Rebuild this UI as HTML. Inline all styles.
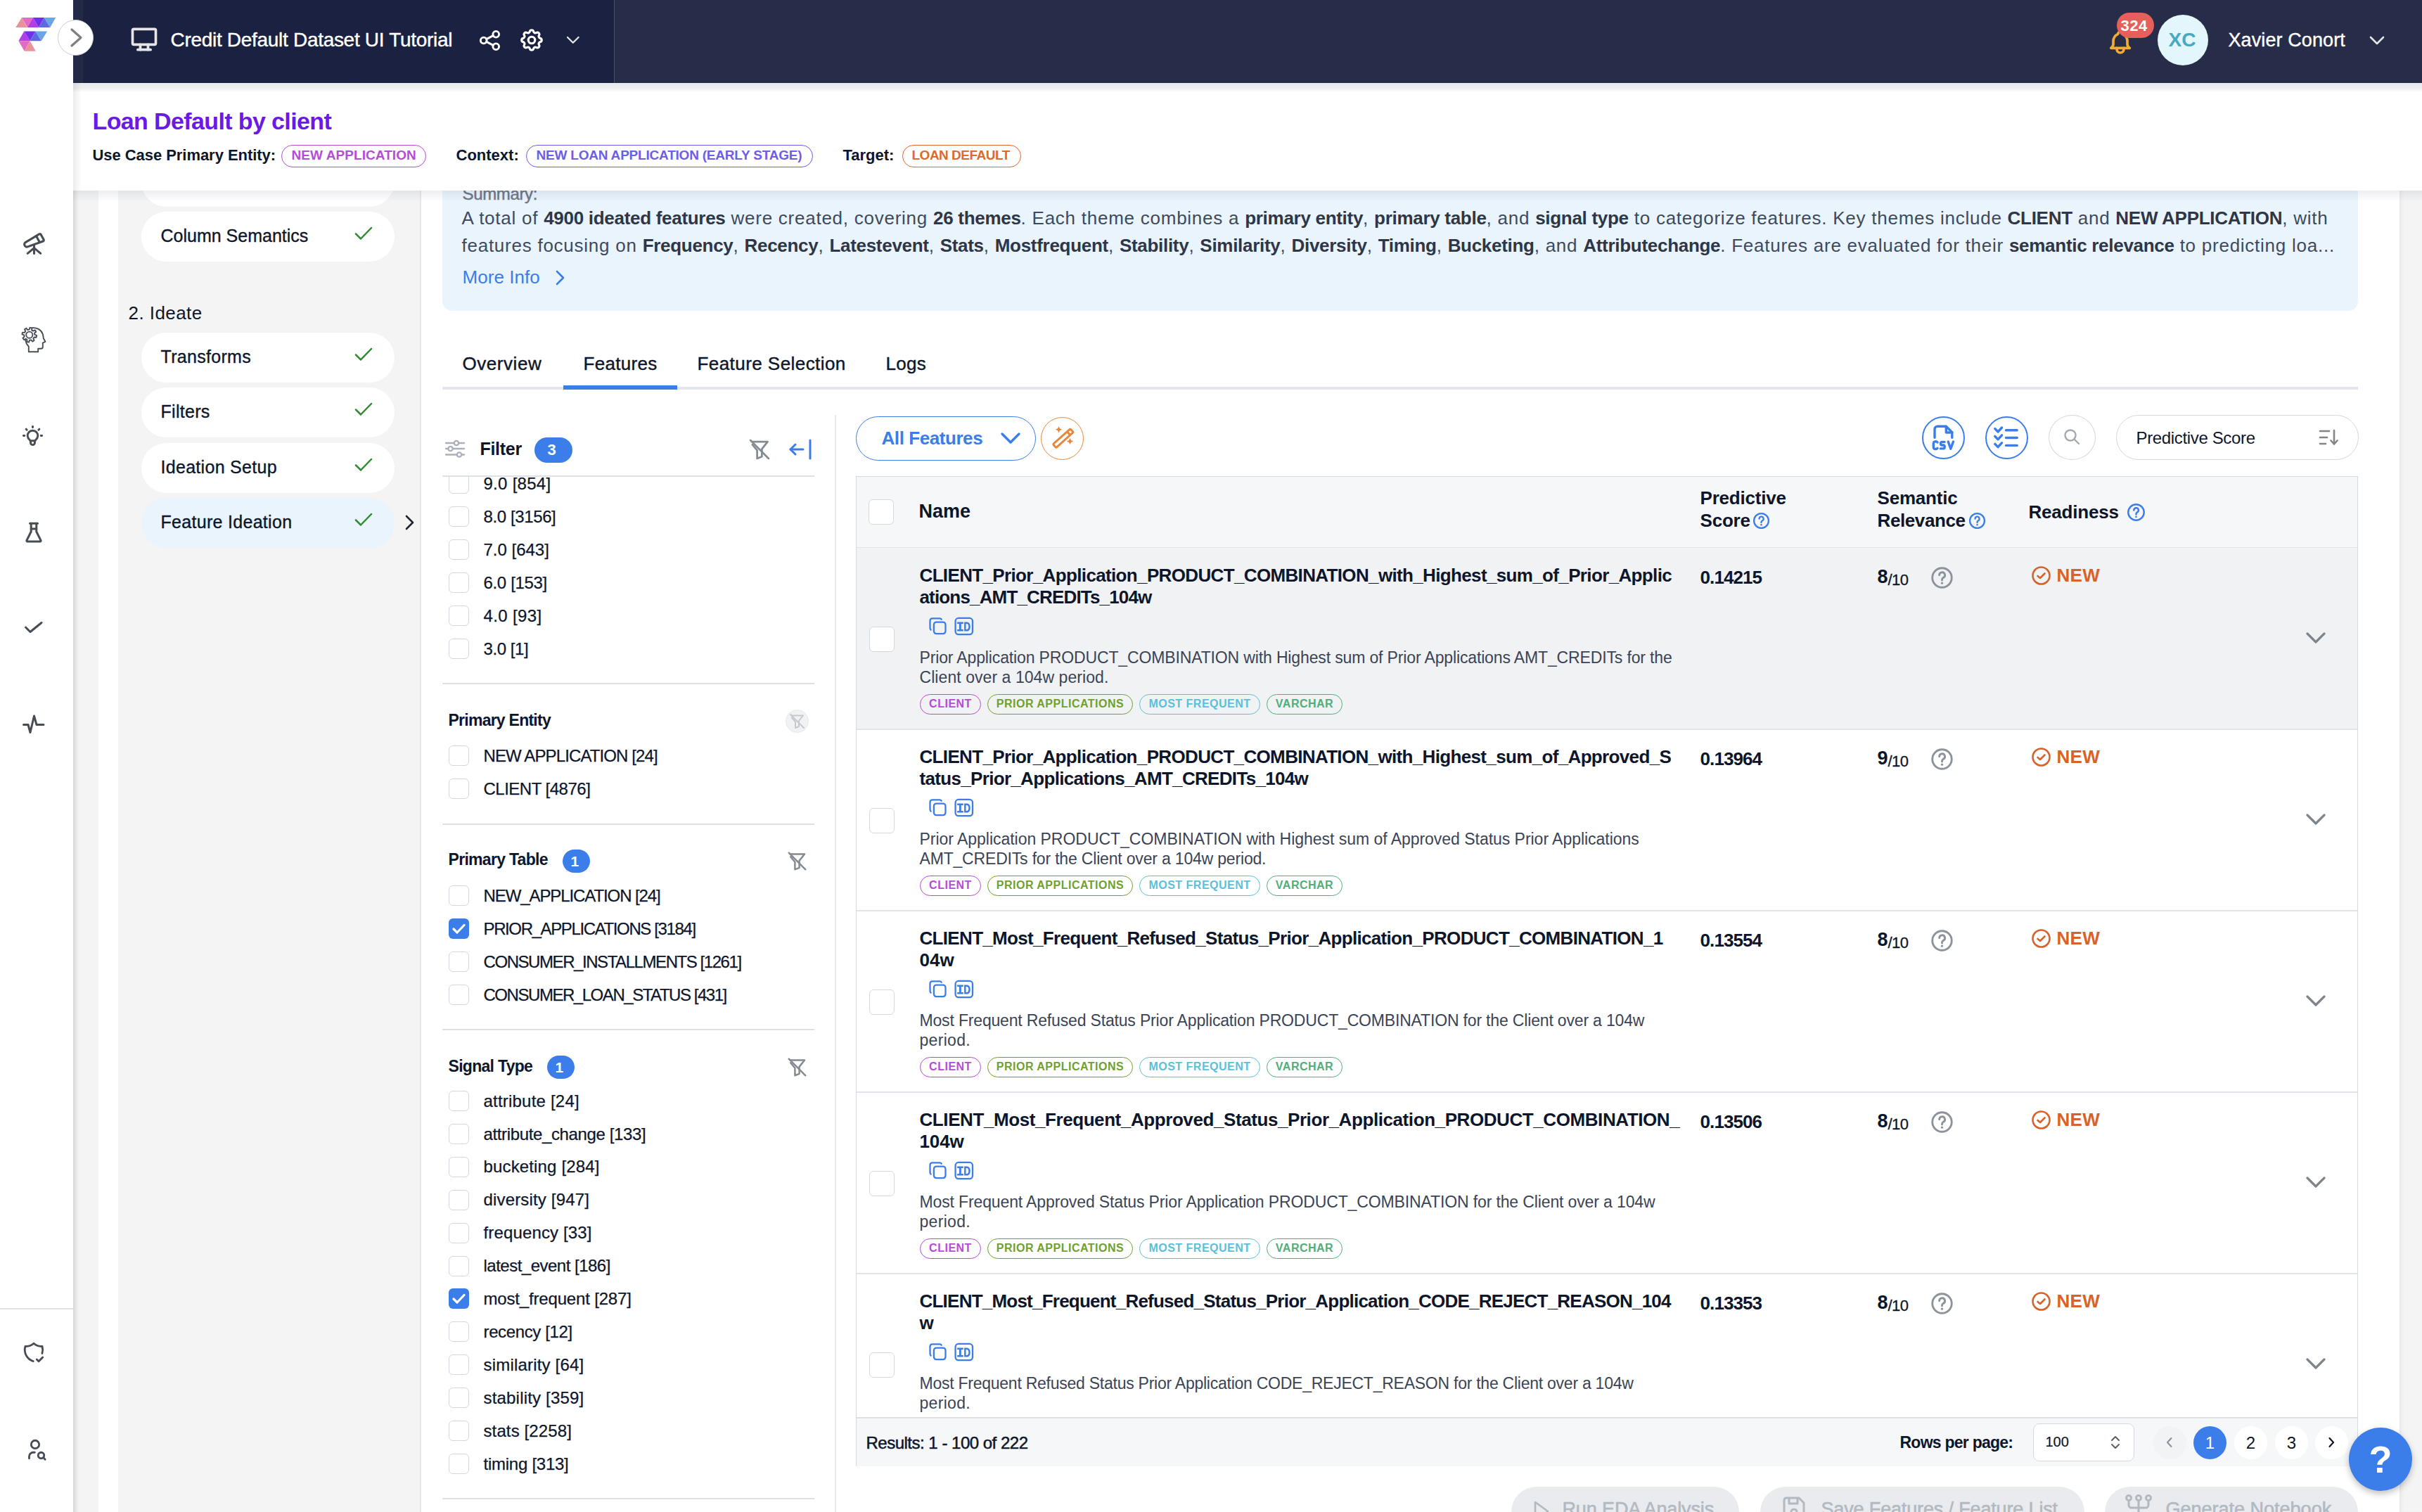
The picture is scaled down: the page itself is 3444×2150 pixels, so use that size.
<!DOCTYPE html><html><head><meta charset="utf-8"><title>Feature Ideation</title><style>
*{box-sizing:border-box;margin:0;padding:0}
html,body{width:3444px;height:2150px;overflow:hidden;background:#fff;font-family:"Liberation Sans",sans-serif;-webkit-font-smoothing:antialiased}
.a{position:absolute}
.t{position:absolute;white-space:nowrap;line-height:1}
.tw{position:absolute;line-height:1}
@media (max-width:2400px){html{zoom:0.5}}
</style></head><body><div class="a" style="left:599px;top:271px;width:2813px;height:1879px;background:#fff;"></div>
<div class="a" style="left:3412px;top:271px;width:32px;height:1879px;background:#f4f4f4;box-shadow:inset 6px 0 6px -4px rgba(0,0,0,.06);"></div>
<div class="a" style="left:104px;top:271px;width:36px;height:1879px;background:#f4f4f4;"></div>
<div class="a" style="left:104px;top:271px;width:9px;height:1879px;background:linear-gradient(90deg,rgba(0,0,0,.07),rgba(0,0,0,0));"></div>
<div class="a" style="left:140px;top:271px;width:28px;height:1879px;background:#fff;"></div>
<div class="a" style="left:168px;top:271px;width:431px;height:1879px;background:#f4f4f4;border-right:2px solid #e6e6ea;"></div>
<div class="a" style="left:201px;top:223px;width:360px;height:71px;background:#fff;border-radius:36px;"></div>
<div class="a" style="left:201px;top:301px;width:360px;height:71px;background:#fff;border-radius:36px;"></div>
<div class="t" style="left:228.5px;top:322.84px;font-size:25px;color:#0e162b;-webkit-text-stroke:0.35px #0e162b;">Column Semantics</div>
<svg class="a" style="left:503px;top:321px;" width="28" height="22" viewBox="0 0 28 22" fill="none"><path d="M3 11.5 L10 18.5 L25 3" stroke="#2e8b2e" stroke-width="2.5" stroke-linecap="round" stroke-linejoin="round"/></svg>
<div class="t" style="left:182.5px;top:431.99px;font-size:26px;color:#0e162b;letter-spacing:0.44px;">2. Ideate</div>
<div class="a" style="left:201px;top:473px;width:360px;height:71px;background:#fff;border-radius:36px;"></div>
<div class="t" style="left:228.5px;top:494.84px;font-size:25px;color:#0e162b;letter-spacing:0.3px;-webkit-text-stroke:0.35px #0e162b;">Transforms</div>
<svg class="a" style="left:503px;top:493px;" width="28" height="22" viewBox="0 0 28 22" fill="none"><path d="M3 11.5 L10 18.5 L25 3" stroke="#2e8b2e" stroke-width="2.5" stroke-linecap="round" stroke-linejoin="round"/></svg>
<div class="a" style="left:201px;top:551px;width:360px;height:71px;background:#fff;border-radius:36px;"></div>
<div class="t" style="left:228.5px;top:572.84px;font-size:25px;color:#0e162b;letter-spacing:0.3px;-webkit-text-stroke:0.35px #0e162b;">Filters</div>
<svg class="a" style="left:503px;top:571px;" width="28" height="22" viewBox="0 0 28 22" fill="none"><path d="M3 11.5 L10 18.5 L25 3" stroke="#2e8b2e" stroke-width="2.5" stroke-linecap="round" stroke-linejoin="round"/></svg>
<div class="a" style="left:201px;top:630px;width:360px;height:71px;background:#fff;border-radius:36px;"></div>
<div class="t" style="left:228.5px;top:651.84px;font-size:25px;color:#0e162b;letter-spacing:0.3px;-webkit-text-stroke:0.35px #0e162b;">Ideation Setup</div>
<svg class="a" style="left:503px;top:650px;" width="28" height="22" viewBox="0 0 28 22" fill="none"><path d="M3 11.5 L10 18.5 L25 3" stroke="#2e8b2e" stroke-width="2.5" stroke-linecap="round" stroke-linejoin="round"/></svg>
<div class="a" style="left:201px;top:708px;width:360px;height:71px;background:#e9f4fd;border-radius:36px;"></div>
<div class="t" style="left:228.5px;top:729.84px;font-size:25px;color:#0e162b;letter-spacing:0.3px;-webkit-text-stroke:0.35px #0e162b;">Feature Ideation</div>
<svg class="a" style="left:503px;top:728px;" width="28" height="22" viewBox="0 0 28 22" fill="none"><path d="M3 11.5 L10 18.5 L25 3" stroke="#2e8b2e" stroke-width="2.5" stroke-linecap="round" stroke-linejoin="round"/></svg>
<svg class="a" style="left:574px;top:731px;" width="18" height="24" viewBox="0 0 18 24" fill="none"><path d="M4 3 L13 12 L4 21" stroke="#1f2430" stroke-width="2.6" stroke-linecap="round" stroke-linejoin="round"/></svg>
<div class="a" style="left:0px;top:0px;width:104px;height:2150px;background:#fff;"></div>
<div class="a" style="left:104px;top:0px;width:6px;height:2150px;background:linear-gradient(90deg,rgba(0,0,0,.05),rgba(0,0,0,0));"></div>
<div class="a" style="left:0px;top:1860px;width:104px;height:2px;background:#dfe2e6;"></div>
<svg class="a" style="left:0px;top:0px;" width="104" height="90" viewBox="0 0 104 90" fill="none"><polygon points="22.22,38.89 38.43,38.89 31.02,25.00" fill="#e8939a"/><polygon points="31.02,25.00 46.76,25.00 38.89,38.89" fill="#e36cc3"/><polygon points="38.89,38.89 55.09,38.89 46.76,25.00" fill="#b23fe6"/><polygon points="46.76,25.00 62.96,25.00 55.09,38.89" fill="#7231e6"/><polygon points="55.09,38.89 71.30,38.89 62.96,25.00" fill="#5e6ae0"/><polygon points="62.96,25.00 79.17,25.00 71.30,38.89" fill="#6aa6e4"/><polygon points="26.39,58.33 42.59,58.33 34.26,44.44" fill="#b23fe6"/><polygon points="34.26,44.44 50.46,44.44 42.59,58.33" fill="#7231e6"/><polygon points="42.59,58.33 58.80,58.33 50.46,44.44" fill="#5e6ae0"/><polygon points="50.46,44.44 67.13,44.44 58.80,58.33" fill="#6aa6e4"/><polygon points="26.39,58.33 42.59,58.33 34.72,72.69" fill="#e36cc3"/><polygon points="34.72,72.69 50.74,72.69 42.59,58.33" fill="#e8939a"/></svg>
<svg class="a" style="left:30px;top:328px;" width="37" height="37" viewBox="0 0 24 24" fill="none"><g stroke="#474d55" stroke-width="2" stroke-linecap="round" stroke-linejoin="round" fill="none"><path d="M6 21l6 -5l6 5"/><path d="M12 13v8"/><path d="M3.294 13.678l.166 .281c.52 .88 1.624 1.265 2.605 .91l14.242 -5.165a1.023 1.023 0 0 0 .565 -1.456l-2.62 -4.705a1.087 1.087 0 0 0 -1.447 -.42l-.056 .032l-12.694 7.618c-1.02 .613 -1.357 1.897 -.76 2.905z"/><path d="M14 5l3 5.5"/></g></svg>
<svg class="a" style="left:24px;top:460px;" width="48" height="48" viewBox="0 0 48 48" fill="none"><g stroke="#474d55" stroke-width="1.9" fill="none" stroke-linejoin="round" stroke-linecap="round">
<path d="M21.8 6.2 C28 5.6 34.5 8.5 36.8 15 C37.6 17.5 37.6 19.5 37.8 21 L40.4 25.8 L36.8 27.6 V33.5 C36.8 34.8 35.6 35.8 34.2 35.8 H30.2 V40.3 H16.8 V32.8 C14.2 29.8 12.6 27 12.1 23.6"/>
<path d="M25.40,15.93 L28.17,16.93 L27.57,19.76 L24.63,19.53 L23.36,21.38 L24.62,24.05 L22.20,25.63 L20.27,23.39 L18.07,23.80 L17.07,26.57 L14.24,25.97 L14.47,23.03 L12.62,21.76 L9.95,23.02 L8.37,20.60 L10.61,18.67 L10.20,16.47 L7.43,15.47 L8.03,12.64 L10.97,12.87 L12.24,11.02 L10.98,8.35 L13.40,6.77 L15.33,9.01 L17.53,8.60 L18.53,5.83 L21.36,6.43 L21.13,9.37 L22.98,10.64 L25.65,9.38 L27.23,11.80 L24.99,13.73 Z"/>
<circle cx="17.8" cy="16.2" r="4.6"/>
</g></svg>
<svg class="a" style="left:29px;top:602px;" width="35" height="35" viewBox="0 0 24 24" fill="none"><g stroke="#474d55" stroke-width="2" stroke-linecap="round" stroke-linejoin="round" fill="none"><path d="M3 12h1m8 -9v1m8 8h1m-15.4 -6.4l.7 .7m12.1 -.7l-.7 .7"/><path d="M9 16a5 5 0 1 1 6 0a3.5 3.5 0 0 0 -1 3a2 2 0 0 1 -4 0a3.5 3.5 0 0 0 -1 -3"/><path d="M9.7 17l4.6 0"/></g></svg>
<svg class="a" style="left:33px;top:741px;" width="30" height="34" viewBox="0 0 30 34" fill="none"><g stroke="#474d55" stroke-width="3" fill="none" stroke-linejoin="round" stroke-linecap="round"><path d="M9.5 3.3 H20.5"/><path d="M11.2 3.3 V15 L5 27.4 a1.1 1.1 0 0 0 1 1.6 H24 a1.1 1.1 0 0 0 1-1.6 L18.8 15 V3.3"/><path d="M11.2 11 H18.8"/></g></svg>
<svg class="a" style="left:33px;top:883px;" width="32" height="24" viewBox="0 0 32 24" fill="none"><path d="M3.5 9 L10 15.5 L26 2.5" stroke="#474d55" stroke-width="3" fill="none" stroke-linecap="round" stroke-linejoin="round"/></svg>
<svg class="a" style="left:31px;top:1015px;" width="34" height="32" viewBox="0 0 34 32" fill="none"><path d="M2.5 15.5 H9 L12 26.5 L17.5 3 L21 15.5 H31" stroke="#474d55" stroke-width="3" fill="none" stroke-linecap="round" stroke-linejoin="round"/></svg>
<svg class="a" style="left:31px;top:1906px;" width="34" height="34" viewBox="0 0 24 24" fill="none"><g stroke="#474d55" stroke-width="2" stroke-linecap="round" stroke-linejoin="round" fill="none"><path d="M11.46 20.846a12 12 0 0 1 -7.96 -14.846a12 12 0 0 0 8.5 -3a12 12 0 0 0 8.5 3a12 12 0 0 1 -.09 7.06"/><path d="M15 19l2 2l4 -4"/></g></svg>
<svg class="a" style="left:33px;top:2044px;" width="34" height="34" viewBox="0 0 24 24" fill="none"><g stroke="#474d55" stroke-width="2" stroke-linecap="round" stroke-linejoin="round" fill="none"><path d="M8 7a4 4 0 1 0 8 0a4 4 0 0 0 -8 0"/><path d="M6 21v-2a4 4 0 0 1 4 -4h1.5"/><path d="M18 18m-3 0a3 3 0 1 0 6 0a3 3 0 1 0 -6 0"/><path d="M20.2 20.2l1.8 1.8"/></g></svg>
<div class="a" style="left:0;top:0;width:3444px;height:271px;z-index:4;">
<div class="a" style="left:104px;top:0px;width:769px;height:118px;background:#1b2140;"></div>
<div class="a" style="left:104px;top:0px;width:14px;height:118px;background:#242a45;"></div>
<div class="a" style="left:873px;top:0px;width:2571px;height:118px;background:#272c48;border-left:1.5px solid #4a4f66;"></div>
<div class="a" style="left:82px;top:28px;width:51px;height:51px;border-radius:50%;background:#fff;border:1.5px solid #c9ced6;"></div>
<svg class="a" style="left:96px;top:38px;" width="26" height="32" viewBox="0 0 26 32" fill="none"><path d="M6 4 L19 15.5 L6 27" stroke="#7f7f7f" stroke-width="3.2" fill="none" stroke-linecap="round" stroke-linejoin="round"/></svg>
<svg class="a" style="left:183px;top:34px;" width="44" height="44" viewBox="0 0 24 24" fill="none"><g stroke="#e6e6e6" stroke-width="2" stroke-linecap="round" stroke-linejoin="round" fill="none"><path d="M3 5a1 1 0 0 1 1 -1h16a1 1 0 0 1 1 1v10a1 1 0 0 1 -1 1h-16a1 1 0 0 1 -1 -1v-10z"/><path d="M7 20h10"/><path d="M9 16v4"/><path d="M15 16v4"/></g></svg>
<div class="t" style="left:242.5px;top:43.30px;font-size:28px;color:#ffffff;letter-spacing:-0.3px;-webkit-text-stroke:0.4px #fff;">Credit Default Dataset UI Tutorial</div>
<svg class="a" style="left:679px;top:40px;" width="35" height="35" viewBox="0 0 24 24" fill="none"><g stroke="#ffffff" stroke-width="2" stroke-linecap="round" stroke-linejoin="round" fill="none"><path d="M6 12m-3 0a3 3 0 1 0 6 0a3 3 0 1 0 -6 0"/><path d="M18 6m-3 0a3 3 0 1 0 6 0a3 3 0 1 0 -6 0"/><path d="M18 18m-3 0a3 3 0 1 0 6 0a3 3 0 1 0 -6 0"/><path d="M8.7 10.7l6.6 -3.4"/><path d="M8.7 13.3l6.6 3.4"/></g></svg>
<svg class="a" style="left:737px;top:38px;" width="38" height="38" viewBox="0 0 24 24" fill="none"><g stroke="#ffffff" stroke-width="2" stroke-linecap="round" stroke-linejoin="round" fill="none"><path d="M10.325 4.317c.426 -1.756 2.924 -1.756 3.35 0a1.724 1.724 0 0 0 2.573 1.066c1.543 -.94 3.31 .826 2.37 2.37a1.724 1.724 0 0 0 1.065 2.572c1.756 .426 1.756 2.924 0 3.35a1.724 1.724 0 0 0 -1.066 2.573c.94 1.543 -.826 3.31 -2.37 2.37a1.724 1.724 0 0 0 -2.572 1.065c-.426 1.756 -2.924 1.756 -3.35 0a1.724 1.724 0 0 0 -2.573 -1.066c-1.543 .94 -3.31 -.826 -2.37 -2.37a1.724 1.724 0 0 0 -1.065 -2.572c-1.756 -.426 -1.756 -2.924 0 -3.35a1.724 1.724 0 0 0 1.066 -2.573c-.94 -1.543 .826 -3.31 2.37 -2.37c1 .608 2.296 .07 2.572 -1.065z"/><path d="M9 12a3 3 0 1 0 6 0a3 3 0 0 0 -6 0"/></g></svg>
<svg class="a" style="left:803px;top:48px;" width="24" height="18" viewBox="0 0 24 18" fill="none"><path d="M4 5 L11.8 12.8 L19.6 5" stroke="#e6e6e6" stroke-width="2.3" fill="none" stroke-linecap="round" stroke-linejoin="round"/></svg>
<svg class="a" style="left:2995px;top:40px;" width="40" height="40" viewBox="0 0 24 24" fill="none"><g stroke="#f2ac32" stroke-width="2.2" stroke-linecap="round" stroke-linejoin="round" fill="none"><path d="M10 5a2 2 0 1 1 4 0a7 7 0 0 1 4 6v3a4 4 0 0 0 2 3h-16a4 4 0 0 0 2 -3v-3a7 7 0 0 1 4 -6"/><path d="M9 17v1a3 3 0 0 0 6 0v-1"/></g></svg>
<div class="a" style="left:3010px;top:18px;width:53px;height:36px;border-radius:18px;background:#e75f5a;"></div>
<div class="t" style="left:3015.5px;top:26.38px;font-size:22px;color:#fff;font-weight:700;letter-spacing:0.5px;">324</div>
<div class="a" style="left:3068px;top:21px;width:72px;height:72px;border-radius:50%;background:#e3f6fb;"></div>
<div class="t" style="left:3083.5px;top:43.30px;font-size:28px;color:#4aa8c0;font-weight:700;">XC</div>
<div class="t" style="left:3168.5px;top:44.14px;font-size:27px;color:#ffffff;letter-spacing:0.1px;-webkit-text-stroke:0.4px #fff;">Xavier Conort</div>
<svg class="a" style="left:3367px;top:48px;" width="26" height="20" viewBox="0 0 26 20" fill="none"><path d="M4 5 L13 14 L22 5" stroke="#e6e6e6" stroke-width="2.6" fill="none" stroke-linecap="round" stroke-linejoin="round"/></svg>
<div class="a" style="left:104px;top:118px;width:3340px;height:153px;background:#fff;"></div>
<div class="a" style="left:104px;top:118px;width:3340px;height:13px;background:linear-gradient(180deg,rgba(20,30,60,.095) 0%,rgba(20,30,60,.08) 55%,rgba(20,30,60,0) 100%);"></div>
<div class="a" style="left:104px;top:118px;width:12px;height:153px;background:linear-gradient(90deg,rgba(0,0,0,.08),rgba(0,0,0,0));"></div>
<div class="a" style="left:104px;top:271px;width:3340px;height:16px;background:linear-gradient(180deg,rgba(20,30,60,.075),rgba(20,30,60,0));z-index:5;"></div>
<div class="t" style="left:131.5px;top:155.22px;font-size:34px;color:#6a19e6;font-weight:700;letter-spacing:-0.62px;">Loan Default by client</div>
<div class="t" style="left:131.5px;top:210.38px;font-size:22px;color:#0e162b;font-weight:700;letter-spacing:-0.05px;">Use Case Primary Entity:</div>
<div class="a" style="left:400px;top:206px;width:206px;height:32px;border-radius:16px;border:1.6px solid #b64bd9;"></div>
<div class="t" style="left:414.5px;top:210.92px;font-size:19px;color:#b64bd9;font-weight:700;letter-spacing:0.07px;">NEW APPLICATION</div>
<div class="t" style="left:648.5px;top:210.38px;font-size:22px;color:#0e162b;font-weight:700;">Context:</div>
<div class="a" style="left:748px;top:206px;width:408px;height:32px;border-radius:16px;border:1.6px solid #6d5de8;"></div>
<div class="t" style="left:762.5px;top:210.92px;font-size:19px;color:#6d5de8;font-weight:700;letter-spacing:-0.21px;">NEW LOAN APPLICATION (EARLY STAGE)</div>
<div class="t" style="left:1198.5px;top:210.38px;font-size:22px;color:#0e162b;font-weight:700;">Target:</div>
<div class="a" style="left:1283px;top:206px;width:169px;height:32px;border-radius:16px;border:1.6px solid #e06a2c;"></div>
<div class="t" style="left:1296.5px;top:210.92px;font-size:19px;color:#e06a2c;font-weight:700;letter-spacing:-0.5px;">LOAN DEFAULT</div>
</div>
<div class="a" style="left:629px;top:230px;width:2724px;height:212px;background:#e9f4fd;border-radius:14px;"></div>
<div class="t" style="left:657.5px;top:263.68px;font-size:24px;color:#6f7788;letter-spacing:-0.35px;-webkit-text-stroke:0.45px #6f7788;">Summary:</div>
<div class="sum1 t" style="left:656.5px;top:296.99px;font-size:26px;color:#3e4a5e;letter-spacing:0.75px;">A total of <b style="color:#2e3647;letter-spacing:-0.29px">4900 ideated features</b> were created, covering <b style="color:#2e3647;letter-spacing:-0.29px">26 themes</b>. Each theme combines a <b style="color:#2e3647;letter-spacing:-0.29px">primary entity</b>, <b style="color:#2e3647;letter-spacing:-0.29px">primary table</b>, and <b style="color:#2e3647;letter-spacing:-0.29px">signal type</b> to categorize features. Key themes include <b style="color:#2e3647;letter-spacing:-0.29px">CLIENT</b> and <b style="color:#2e3647;letter-spacing:-0.29px">NEW APPLICATION</b>, with</div>
<div class="sum2 t" style="left:656.5px;top:335.99px;font-size:26px;color:#3e4a5e;letter-spacing:0.75px;">features focusing on <b style="color:#2e3647;letter-spacing:-0.29px">Frequency</b>, <b style="color:#2e3647;letter-spacing:-0.29px">Recency</b>, <b style="color:#2e3647;letter-spacing:-0.29px">Latestevent</b>, <b style="color:#2e3647;letter-spacing:-0.29px">Stats</b>, <b style="color:#2e3647;letter-spacing:-0.29px">Mostfrequent</b>, <b style="color:#2e3647;letter-spacing:-0.29px">Stability</b>, <b style="color:#2e3647;letter-spacing:-0.29px">Similarity</b>, <b style="color:#2e3647;letter-spacing:-0.29px">Diversity</b>, <b style="color:#2e3647;letter-spacing:-0.29px">Timing</b>, <b style="color:#2e3647;letter-spacing:-0.29px">Bucketing</b>, and <b style="color:#2e3647;letter-spacing:-0.29px">Attributechange</b>. Features are evaluated for their <b style="color:#2e3647;letter-spacing:-0.29px">semantic relevance</b> to predicting loa...</div>
<div class="t" style="left:657.5px;top:380.99px;font-size:26px;color:#3b7de9;letter-spacing:0.05px;">More Info</div>
<svg class="a" style="left:786px;top:382px;" width="22" height="26" viewBox="0 0 22 26" fill="none"><path d="M6 4 L15 13 L6 22" stroke="#3b7de9" stroke-width="2.6" fill="none" stroke-linecap="round" stroke-linejoin="round"/></svg>
<div class="a" style="left:629px;top:550px;width:2724px;height:4px;background:#e3e6eb;"></div>
<div class="a" style="left:801px;top:548px;width:162px;height:6px;background:#3b7de9;"></div>
<div class="t" style="left:657.5px;top:503.99px;font-size:26px;color:#0e162b;letter-spacing:0.55px;-webkit-text-stroke:0.4px #0e162b;">Overview</div>
<div class="t" style="left:829.5px;top:503.99px;font-size:26px;color:#0e162b;letter-spacing:0.3px;-webkit-text-stroke:0.4px #0e162b;">Features</div>
<div class="t" style="left:991.5px;top:503.99px;font-size:26px;color:#0e162b;letter-spacing:0.44px;-webkit-text-stroke:0.4px #0e162b;">Feature Selection</div>
<div class="t" style="left:1259.5px;top:503.99px;font-size:26px;color:#0e162b;letter-spacing:0.3px;-webkit-text-stroke:0.4px #0e162b;">Logs</div>
<div class="a" style="left:1187px;top:590px;width:2px;height:1560px;background:#e8eaee;"></div>
<svg class="a" style="left:631px;top:624px;" width="32" height="30" viewBox="0 0 32 30" fill="none"><g stroke="#aab0b8" stroke-width="2.3" fill="none" stroke-linecap="round"><path d="M3 6 H29"/><path d="M3 14 H29"/><path d="M3 22.5 H29"/></g><g fill="#fff" stroke="#aab0b8" stroke-width="2.3"><circle cx="18" cy="6" r="3.2"/><circle cx="9.5" cy="14" r="3.2"/><circle cx="22" cy="22.5" r="3.2"/></g></svg>
<div class="t" style="left:682.5px;top:625.84px;font-size:25px;color:#0e162b;font-weight:700;letter-spacing:-0.3px;">Filter</div>
<div class="a" style="left:760px;top:622px;width:54px;height:36px;border-radius:18px;background:#3b7de9;"></div>
<div class="t" style="left:778.5px;top:629.38px;font-size:22px;color:#fff;font-weight:700;">3</div>
<svg class="a" style="left:1063px;top:622px;" width="34" height="34" viewBox="0 0 25 25" fill="none"><g stroke="#858b93" stroke-width="2" fill="none" stroke-linecap="round" stroke-linejoin="round"><path d="M4.5 4.5 H21 L15 12 V20 L10 22 V13.5 L5 7.5"/><path d="M3 3 L22 22"/></g></svg>
<svg class="a" style="left:1120px;top:622px;" width="38" height="34" viewBox="0 0 38 34" fill="none"><g stroke="#3b7de9" stroke-width="3" fill="none" stroke-linecap="round" stroke-linejoin="round"><path d="M4 17 H22"/><path d="M11 10 L4 17 L11 24"/><path d="M32 4 V30"/></g></svg>
<div class="a" style="left:629px;top:676px;width:529px;height:2px;background:#dde1e6;"></div>
<div class="a" style="left:600px;top:678px;width:586px;height:1472px;overflow:hidden;">
<div class="a" style="left:38px;top:-5px;width:29px;height:29px;border-radius:6px;background:#fff;border:1.5px solid #d3d7de;"></div>
<div class="t" style="left:87.5px;top:-2.32px;font-size:24px;color:#0e162b;letter-spacing:0.275px;-webkit-text-stroke:0.25px #0e162b;">9.0 [854]</div>
<div class="a" style="left:38px;top:42px;width:29px;height:29px;border-radius:6px;background:#fff;border:1.5px solid #d3d7de;"></div>
<div class="t" style="left:87.5px;top:44.68px;font-size:24px;color:#0e162b;letter-spacing:-0.389px;-webkit-text-stroke:0.25px #0e162b;">8.0 [3156]</div>
<div class="a" style="left:38px;top:89px;width:29px;height:29px;border-radius:6px;background:#fff;border:1.5px solid #d3d7de;"></div>
<div class="t" style="left:87.5px;top:91.68px;font-size:24px;color:#0e162b;letter-spacing:-0.013px;-webkit-text-stroke:0.25px #0e162b;">7.0 [643]</div>
<div class="a" style="left:38px;top:136px;width:29px;height:29px;border-radius:6px;background:#fff;border:1.5px solid #d3d7de;"></div>
<div class="t" style="left:87.5px;top:138.68px;font-size:24px;color:#0e162b;letter-spacing:-0.35px;-webkit-text-stroke:0.25px #0e162b;">6.0 [153]</div>
<div class="a" style="left:38px;top:183px;width:29px;height:29px;border-radius:6px;background:#fff;border:1.5px solid #d3d7de;"></div>
<div class="t" style="left:87.5px;top:185.68px;font-size:24px;color:#0e162b;letter-spacing:0.371px;-webkit-text-stroke:0.25px #0e162b;">4.0 [93]</div>
<div class="a" style="left:38px;top:230px;width:29px;height:29px;border-radius:6px;background:#fff;border:1.5px solid #d3d7de;"></div>
<div class="t" style="left:87.5px;top:232.68px;font-size:24px;color:#0e162b;letter-spacing:-0.433px;-webkit-text-stroke:0.25px #0e162b;">3.0 [1]</div>
<div class="a" style="left:29px;top:293px;width:529px;height:2px;background:#dde1e6;"></div>
<div class="t" style="left:37.5px;top:334.53px;font-size:23px;color:#0e162b;font-weight:700;letter-spacing:-0.75px;">Primary Entity</div>
<div class="a" style="left:517px;top:331px;width:33px;height:33px;border-radius:50%;background:#f1f2f4;border:1px solid #e6e8eb;"></div>
<svg class="a" style="left:521px;top:335px;" width="25" height="25" viewBox="0 0 25 25" fill="none"><g stroke="#c6cacf" stroke-width="2" fill="none" stroke-linecap="round" stroke-linejoin="round"><path d="M4.5 4.5 H21 L15 12 V20 L10 22 V13.5 L5 7.5"/><path d="M3 3 L22 22"/></g></svg>
<div class="a" style="left:38px;top:382px;width:29px;height:29px;border-radius:6px;background:#fff;border:1.5px solid #d3d7de;"></div>
<div class="t" style="left:87.5px;top:384.68px;font-size:24px;color:#0e162b;letter-spacing:-0.882px;-webkit-text-stroke:0.25px #0e162b;">NEW APPLICATION [24]</div>
<div class="a" style="left:38px;top:429px;width:29px;height:29px;border-radius:6px;background:#fff;border:1.5px solid #d3d7de;"></div>
<div class="t" style="left:87.5px;top:431.68px;font-size:24px;color:#0e162b;letter-spacing:-0.5px;-webkit-text-stroke:0.25px #0e162b;">CLIENT [4876]</div>
<div class="a" style="left:29px;top:493px;width:529px;height:2px;background:#dde1e6;"></div>
<div class="t" style="left:37.5px;top:532.53px;font-size:23px;color:#0e162b;font-weight:700;letter-spacing:-0.7px;">Primary Table</div>
<div class="a" style="left:200px;top:530px;width:39px;height:33px;border-radius:17px;background:#3b7de9;"></div>
<div class="t" style="left:211.5px;top:536.22px;font-size:21px;color:#fff;font-weight:700;">1</div>
<svg class="a" style="left:518px;top:531px;" width="31" height="31" viewBox="0 0 25 25" fill="none"><g stroke="#858b93" stroke-width="2" fill="none" stroke-linecap="round" stroke-linejoin="round"><path d="M4.5 4.5 H21 L15 12 V20 L10 22 V13.5 L5 7.5"/><path d="M3 3 L22 22"/></g></svg>
<div class="a" style="left:38px;top:581px;width:29px;height:29px;border-radius:6px;background:#fff;border:1.5px solid #d3d7de;"></div>
<div class="t" style="left:87.5px;top:583.68px;font-size:24px;color:#0e162b;letter-spacing:-1.09px;-webkit-text-stroke:0.25px #0e162b;">NEW_APPLICATION [24]</div>
<div class="a" style="left:38px;top:628px;width:29px;height:29px;border-radius:6px;background:#3b7de9;"></div>
<svg class="a" style="left:38px;top:628px;" width="29" height="29" viewBox="0 0 29 29" fill="none"><path d="M7 15 L12 20 L22 9.5" stroke="#fff" stroke-width="3.2" fill="none" stroke-linecap="round" stroke-linejoin="round"/></svg>
<div class="t" style="left:87.5px;top:630.68px;font-size:24px;color:#0e162b;letter-spacing:-1.378px;-webkit-text-stroke:0.25px #0e162b;">PRIOR_APPLICATIONS [3184]</div>
<div class="a" style="left:38px;top:675px;width:29px;height:29px;border-radius:6px;background:#fff;border:1.5px solid #d3d7de;"></div>
<div class="t" style="left:87.5px;top:677.68px;font-size:24px;color:#0e162b;letter-spacing:-1.434px;-webkit-text-stroke:0.25px #0e162b;">CONSUMER_INSTALLMENTS [1261]</div>
<div class="a" style="left:38px;top:722px;width:29px;height:29px;border-radius:6px;background:#fff;border:1.5px solid #d3d7de;"></div>
<div class="t" style="left:87.5px;top:724.68px;font-size:24px;color:#0e162b;letter-spacing:-1.458px;-webkit-text-stroke:0.25px #0e162b;">CONSUMER_LOAN_STATUS [431]</div>
<div class="a" style="left:29px;top:785px;width:529px;height:2px;background:#dde1e6;"></div>
<div class="t" style="left:37.5px;top:826.53px;font-size:23px;color:#0e162b;font-weight:700;letter-spacing:-0.7px;">Signal Type</div>
<div class="a" style="left:178px;top:823px;width:39px;height:33px;border-radius:17px;background:#3b7de9;"></div>
<div class="t" style="left:189.5px;top:829.22px;font-size:21px;color:#fff;font-weight:700;">1</div>
<svg class="a" style="left:518px;top:824px;" width="31" height="31" viewBox="0 0 25 25" fill="none"><g stroke="#858b93" stroke-width="2" fill="none" stroke-linecap="round" stroke-linejoin="round"><path d="M4.5 4.5 H21 L15 12 V20 L10 22 V13.5 L5 7.5"/><path d="M3 3 L22 22"/></g></svg>
<div class="a" style="left:38px;top:873.0px;width:29px;height:29px;border-radius:6px;background:#fff;border:1.5px solid #d3d7de;"></div>
<div class="t" style="left:87.5px;top:875.68px;font-size:24px;color:#0e162b;letter-spacing:0.208px;-webkit-text-stroke:0.25px #0e162b;">attribute [24]</div>
<div class="a" style="left:38px;top:919.9000000000001px;width:29px;height:29px;border-radius:6px;background:#fff;border:1.5px solid #d3d7de;"></div>
<div class="t" style="left:87.5px;top:922.58px;font-size:24px;color:#0e162b;letter-spacing:-0.362px;-webkit-text-stroke:0.25px #0e162b;">attribute_change [133]</div>
<div class="a" style="left:38px;top:966.8px;width:29px;height:29px;border-radius:6px;background:#fff;border:1.5px solid #d3d7de;"></div>
<div class="t" style="left:87.5px;top:969.48px;font-size:24px;color:#0e162b;letter-spacing:0.15px;-webkit-text-stroke:0.25px #0e162b;">bucketing [284]</div>
<div class="a" style="left:38px;top:1013.7px;width:29px;height:29px;border-radius:6px;background:#fff;border:1.5px solid #d3d7de;"></div>
<div class="t" style="left:87.5px;top:1016.38px;font-size:24px;color:#0e162b;letter-spacing:0.164px;-webkit-text-stroke:0.25px #0e162b;">diversity [947]</div>
<div class="a" style="left:38px;top:1060.6px;width:29px;height:29px;border-radius:6px;background:#fff;border:1.5px solid #d3d7de;"></div>
<div class="t" style="left:87.5px;top:1063.28px;font-size:24px;color:#0e162b;letter-spacing:0.146px;-webkit-text-stroke:0.25px #0e162b;">frequency [33]</div>
<div class="a" style="left:38px;top:1107.5px;width:29px;height:29px;border-radius:6px;background:#fff;border:1.5px solid #d3d7de;"></div>
<div class="t" style="left:87.5px;top:1110.18px;font-size:24px;color:#0e162b;letter-spacing:-0.506px;-webkit-text-stroke:0.25px #0e162b;">latest_event [186]</div>
<div class="a" style="left:38px;top:1154.4px;width:29px;height:29px;border-radius:6px;background:#3b7de9;"></div>
<svg class="a" style="left:38px;top:1154.4px;" width="29" height="29" viewBox="0 0 29 29" fill="none"><path d="M7 15 L12 20 L22 9.5" stroke="#fff" stroke-width="3.2" fill="none" stroke-linecap="round" stroke-linejoin="round"/></svg>
<div class="t" style="left:87.5px;top:1157.08px;font-size:24px;color:#0e162b;letter-spacing:-0.172px;-webkit-text-stroke:0.25px #0e162b;">most_frequent [287]</div>
<div class="a" style="left:38px;top:1201.3px;width:29px;height:29px;border-radius:6px;background:#fff;border:1.5px solid #d3d7de;"></div>
<div class="t" style="left:87.5px;top:1203.98px;font-size:24px;color:#0e162b;letter-spacing:-0.364px;-webkit-text-stroke:0.25px #0e162b;">recency [12]</div>
<div class="a" style="left:38px;top:1248.2px;width:29px;height:29px;border-radius:6px;background:#fff;border:1.5px solid #d3d7de;"></div>
<div class="t" style="left:87.5px;top:1250.88px;font-size:24px;color:#0e162b;letter-spacing:0.186px;-webkit-text-stroke:0.25px #0e162b;">similarity [64]</div>
<div class="a" style="left:38px;top:1295.1px;width:29px;height:29px;border-radius:6px;background:#fff;border:1.5px solid #d3d7de;"></div>
<div class="t" style="left:87.5px;top:1297.78px;font-size:24px;color:#0e162b;letter-spacing:0.186px;-webkit-text-stroke:0.25px #0e162b;">stability [359]</div>
<div class="a" style="left:38px;top:1342.0px;width:29px;height:29px;border-radius:6px;background:#fff;border:1.5px solid #d3d7de;"></div>
<div class="t" style="left:87.5px;top:1344.68px;font-size:24px;color:#0e162b;letter-spacing:0.118px;-webkit-text-stroke:0.25px #0e162b;">stats [2258]</div>
<div class="a" style="left:38px;top:1388.9px;width:29px;height:29px;border-radius:6px;background:#fff;border:1.5px solid #d3d7de;"></div>
<div class="t" style="left:87.5px;top:1391.58px;font-size:24px;color:#0e162b;letter-spacing:-0.255px;-webkit-text-stroke:0.25px #0e162b;">timing [313]</div>
<div class="a" style="left:29px;top:1452px;width:529px;height:2px;background:#dde1e6;"></div>
</div>
<div class="a" style="left:1217px;top:592px;width:256px;height:63px;border-radius:32px;border:1.5px solid #3b7de9;"></div>
<div class="t" style="left:1253.5px;top:609.99px;font-size:26px;color:#3b7de9;font-weight:700;letter-spacing:-0.43px;">All Features</div>
<svg class="a" style="left:1420px;top:612px;" width="34" height="24" viewBox="0 0 34 24" fill="none"><path d="M5 5 L17 17 L29 5" stroke="#3b7de9" stroke-width="3.4" fill="none" stroke-linecap="round" stroke-linejoin="round"/></svg>
<div class="a" style="left:1480px;top:593px;width:61px;height:61px;border-radius:50%;border:1.5px solid #e8873a;"></div>
<svg class="a" style="left:1494px;top:604px;" width="36" height="36" viewBox="0 0 36 36" fill="none"><g stroke="#e8873a" stroke-width="3" fill="none" stroke-linejoin="round"><g transform="translate(17.8 19.2) rotate(-42)"><rect x="-16.5" y="-3.3" width="33" height="6.6" rx="1.6"/><path d="M10.5 -3.3 V3.3"/></g></g><g fill="#e8873a"><path d="M11.5 2.2 l1.5 3.1 l3.1 1.5 l-3.1 1.5 l-1.5 3.1 l-1.5-3.1 l-3.1-1.5 l3.1-1.5z"/><path d="M27.5 18.8 l1.5 3.1 l3.1 1.5 l-3.1 1.5 l-1.5 3.1 l-1.5-3.1 l-3.1-1.5 l3.1-1.5z"/></g></svg>
<div class="a" style="left:2733px;top:592px;width:61px;height:61px;border-radius:50%;border:2px solid #3b7de9;"></div>
<svg class="a" style="left:2733px;top:592px;" width="61" height="61" viewBox="0 0 61 61" fill="none"><g stroke="#3b7de9" stroke-width="3.4" fill="none" stroke-linejoin="round" stroke-linecap="round"><path d="M18 30.2 V18.2 a4 4 0 0 1 4-4 H34.3 L42.8 22.6 V30.2"/><path d="M34.3 14.2 V23 H42.8"/><path d="M22 37 C21 35.3 16.3 35.1 16.3 38.6 V43.7 C16.3 47.2 21 47.1 22 45.4"/><path d="M32 36.4 H28.6 C25.9 36.4 25.9 41 28.6 41 H30.2 C32.9 41 32.9 45.9 30.2 45.9 H26.4"/><path d="M37.2 36 L40.8 46.2 L44.5 36"/></g></svg>
<div class="a" style="left:2823px;top:592px;width:61px;height:61px;border-radius:50%;border:2px solid #3b7de9;"></div>
<svg class="a" style="left:2823px;top:592px;" width="61" height="61" viewBox="0 0 61 61" fill="none"><g stroke="#3b7de9" stroke-width="3.4" fill="none" stroke-linecap="round" stroke-linejoin="round"><path d="M13.8 17.6 L18 22 L23.6 16"/><path d="M13.8 28.4 L18 32.8 L23.6 26.8"/><path d="M13.8 39.3 L18 43.7 L23.6 37.7"/><path d="M29.5 19.8 H45.2"/><path d="M29.5 30.5 H45.2"/><path d="M29.5 41.4 H45.2"/></g></svg>
<div class="a" style="left:2913px;top:590px;width:67px;height:64px;border-radius:50%;border:1.5px solid #d3d7de;"></div>
<svg class="a" style="left:2932px;top:607px;" width="30" height="30" viewBox="0 0 30 30" fill="none"><g stroke="#a3a9b1" stroke-width="2.4" fill="none" stroke-linecap="round"><circle cx="12" cy="12" r="7.5"/><path d="M17.5 17.5 L24 24"/></g></svg>
<div class="a" style="left:3009px;top:590px;width:345px;height:64px;border-radius:32px;border:1.5px solid #d3d7de;background:#fff;"></div>
<div class="t" style="left:3037.5px;top:610.68px;font-size:24px;color:#0e162b;letter-spacing:-0.35px;">Predictive Score</div>
<svg class="a" style="left:3294px;top:608px;" width="36" height="28" viewBox="0 0 36 28" fill="none"><g stroke="#858585" stroke-width="2.6" fill="none" stroke-linecap="round" stroke-linejoin="round"><path d="M5 5 H18"/><path d="M5 14 H15"/><path d="M5 23 H13"/><path d="M25 4 V23"/><path d="M20.5 18.5 L25 23.5 L29.5 18.5"/></g></svg>
<div class="a" style="left:1217px;top:677px;width:2136px;height:1408px;border:1px solid #d6dbe1;border-bottom:none;overflow:hidden;background:#fff;">
<div class="a" style="left:0px;top:0px;width:2136px;height:102px;background:#f6f7f9;border-bottom:2px solid #e1e4e8;"></div>
<div class="a" style="left:17px;top:32px;width:36px;height:36px;border-radius:6px;background:#fff;border:1.5px solid #d3d7de;"></div>
<div class="t" style="left:88.5px;top:36.14px;font-size:27px;color:#0e162b;font-weight:700;">Name</div>
<div class="t" style="left:1199.5px;top:16.99px;font-size:26px;color:#0e162b;font-weight:700;letter-spacing:-0.2px;">Predictive</div>
<div class="t" style="left:1199.5px;top:48.99px;font-size:26px;color:#0e162b;font-weight:700;letter-spacing:-0.2px;">Score</div>
<div class="t" style="left:1451.5px;top:16.99px;font-size:26px;color:#0e162b;font-weight:700;letter-spacing:-0.2px;">Semantic</div>
<div class="t" style="left:1451.5px;top:48.99px;font-size:26px;color:#0e162b;font-weight:700;letter-spacing:-0.4px;">Relevance</div>
<div class="t" style="left:1666.5px;top:36.99px;font-size:26px;color:#0e162b;font-weight:700;letter-spacing:-0.2px;">Readiness</div>
<svg class="a" style="left:1274px;top:50px;" width="25" height="25" viewBox="0 0 24 24" fill="none"><circle cx="12" cy="12" r="10" stroke="#3b7de9" stroke-width="2.2" fill="none"/><path d="M9.2 9.3 a2.9 2.9 0 1 1 4.2 2.6 c-.9 .5-1.4 1.1-1.4 2.1 v.6" stroke="#3b7de9" stroke-width="2.2" fill="none" stroke-linecap="round"/><circle cx="12" cy="17.6" r="1.2" fill="#3b7de9"/></svg>
<svg class="a" style="left:1581px;top:50px;" width="25" height="25" viewBox="0 0 24 24" fill="none"><circle cx="12" cy="12" r="10" stroke="#3b7de9" stroke-width="2.2" fill="none"/><path d="M9.2 9.3 a2.9 2.9 0 1 1 4.2 2.6 c-.9 .5-1.4 1.1-1.4 2.1 v.6" stroke="#3b7de9" stroke-width="2.2" fill="none" stroke-linecap="round"/><circle cx="12" cy="17.6" r="1.2" fill="#3b7de9"/></svg>
<svg class="a" style="left:1806px;top:37px;" width="27" height="27" viewBox="0 0 24 24" fill="none"><circle cx="12" cy="12" r="10" stroke="#3b7de9" stroke-width="2.2" fill="none"/><path d="M9.2 9.3 a2.9 2.9 0 1 1 4.2 2.6 c-.9 .5-1.4 1.1-1.4 2.1 v.6" stroke="#3b7de9" stroke-width="2.2" fill="none" stroke-linecap="round"/><circle cx="12" cy="17.6" r="1.2" fill="#3b7de9"/></svg>
<div class="a" style="left:0px;top:101px;width:2136px;height:258px;background:#f1f2f4;"></div>
<div class="nm1r0 t" style="left:89.5px;top:126.99px;font-size:26px;color:#0e162b;font-weight:700;letter-spacing:-0.644px;">CLIENT_Prior_Application_PRODUCT_COMBINATION_with_Highest_sum_of_Prior_Applic</div>
<div class="nm2r0 t" style="left:89.5px;top:157.99px;font-size:26px;color:#0e162b;font-weight:700;letter-spacing:-0.838px;">ations_AMT_CREDITs_104w</div>
<svg class="a" style="left:96px;top:194px;" width="80" height="38" viewBox="0 0 80 38" fill="none"><g stroke="#3b7de9" stroke-width="2.3" fill="none" stroke-linecap="round" stroke-linejoin="round"><rect x="13.9" y="12.6" width="16.6" height="16.6" rx="3.6"/><path d="M9.6 23.6 C8.9 22.9 8.5 22.1 8.5 21 V10.8 C8.5 8.9 9.9 7.4 11.8 7.4 H22.4 C23.4 7.4 24.2 7.9 24.7 8.7"/><rect x="44.6" y="6.9" width="24.4" height="23.3" rx="4.4"/></g><g fill="#3b7de9"><path d="M47.1 12.4 H55.8 V15 H52.8 V23 H55.8 V25.6 H47.1 V23 H49.9 V15 H47.1 Z"/><path fill-rule="evenodd" d="M57.1 12.4 H61 C64 12.4 65.8 15.5 65.8 19 C65.8 22.5 64 25.6 61 25.6 H57.1 Z M59.5 15 H60.7 C62.4 15 63.3 16.8 63.3 19 C63.3 21.2 62.4 23 60.7 23 H59.5 Z"/></g></svg>
<div class="a" style="left:18px;top:213px;width:36px;height:36px;border-radius:6px;background:#fff;border:1.5px solid #d3d7de;"></div>
<div class="ds1r0 t" style="left:89.5px;top:245.53px;font-size:23px;color:#3a4456;letter-spacing:-0.139px;">Prior Application PRODUCT_COMBINATION with Highest sum of Prior Applications AMT_CREDITs for the</div>
<div class="ds2r0 t" style="left:89.5px;top:273.53px;font-size:23px;color:#3a4456;letter-spacing:0.064px;">Client over a 104w period.</div>
<div class="a" style="left:90px;top:309px;width:87px;height:29px;border-radius:15px;border:1.5px solid #b64bd9;"></div>
<div class="t" style="left:90px;top:315.46px;font-size:16px;color:#b64bd9;font-weight:700;letter-spacing:0.5px;width:87px;text-align:center;">CLIENT</div>
<div class="a" style="left:186px;top:309px;width:207px;height:29px;border-radius:15px;border:1.5px solid #6fa12e;"></div>
<div class="t" style="left:186px;top:315.46px;font-size:16px;color:#6fa12e;font-weight:700;letter-spacing:0.5px;width:207px;text-align:center;">PRIOR APPLICATIONS</div>
<div class="a" style="left:402px;top:309px;width:172px;height:29px;border-radius:15px;border:1.5px solid #5bc0d9;"></div>
<div class="t" style="left:402px;top:315.46px;font-size:16px;color:#5bc0d9;font-weight:700;letter-spacing:0.5px;width:172px;text-align:center;">MOST FREQUENT</div>
<div class="a" style="left:583px;top:309px;width:108px;height:29px;border-radius:15px;border:1.5px solid #4fae7a;"></div>
<div class="t" style="left:583px;top:315.46px;font-size:16px;color:#4fae7a;font-weight:700;letter-spacing:0.5px;width:108px;text-align:center;">VARCHAR</div>
<div class="t" style="left:1199.5px;top:129.99px;font-size:26px;color:#0e162b;font-weight:700;letter-spacing:-0.9px;">0.14215</div>
<div class="t" style="left:1451.5px;top:129.14px;font-size:27px;color:#0e162b;font-weight:700;">8</div>
<div class="t" style="left:1466.5px;top:136.38px;font-size:22px;color:#0e162b;letter-spacing:-0.5px;-webkit-text-stroke:0.3px #0e162b;">/10</div>
<svg class="a" style="left:1527px;top:127px;" width="33" height="33" viewBox="0 0 24 24" fill="none"><circle cx="12" cy="12" r="10" stroke="#8d939b" stroke-width="2.1" fill="none"/><path d="M9.2 9.3 a2.9 2.9 0 1 1 4.2 2.6 c-.9 .5-1.4 1.1-1.4 2.1 v.6" stroke="#8d939b" stroke-width="2.1" fill="none" stroke-linecap="round"/><circle cx="12" cy="17.6" r="1.2" fill="#8d939b"/></svg>
<svg class="a" style="left:1670px;top:126px;" width="29" height="29" viewBox="0 0 29 29" fill="none"><circle cx="14.5" cy="14.5" r="12" stroke="#d9622b" stroke-width="2.6" fill="none"/><path d="M9.5 15 L13 18 L19.5 11.5" stroke="#d9622b" stroke-width="2.6" fill="none" stroke-linecap="round" stroke-linejoin="round"/></svg>
<div class="t" style="left:1706.5px;top:126.99px;font-size:26px;color:#d9622b;font-weight:700;letter-spacing:0.3px;">NEW</div>
<svg class="a" style="left:2058px;top:217px;" width="34" height="26" viewBox="0 0 34 26" fill="none"><path d="M5 6 L17 18 L29 6" stroke="#7d848c" stroke-width="3.2" fill="none" stroke-linecap="round" stroke-linejoin="round"/></svg>
<div class="a" style="left:0px;top:358px;width:2136px;height:2px;background:#e1e4e8;"></div>
<div class="nm1r1 t" style="left:89.5px;top:384.99px;font-size:26px;color:#0e162b;font-weight:700;letter-spacing:-0.654px;">CLIENT_Prior_Application_PRODUCT_COMBINATION_with_Highest_sum_of_Approved_S</div>
<div class="nm2r1 t" style="left:89.5px;top:415.99px;font-size:26px;color:#0e162b;font-weight:700;letter-spacing:-0.675px;">tatus_Prior_Applications_AMT_CREDITs_104w</div>
<svg class="a" style="left:96px;top:452px;" width="80" height="38" viewBox="0 0 80 38" fill="none"><g stroke="#3b7de9" stroke-width="2.3" fill="none" stroke-linecap="round" stroke-linejoin="round"><rect x="13.9" y="12.6" width="16.6" height="16.6" rx="3.6"/><path d="M9.6 23.6 C8.9 22.9 8.5 22.1 8.5 21 V10.8 C8.5 8.9 9.9 7.4 11.8 7.4 H22.4 C23.4 7.4 24.2 7.9 24.7 8.7"/><rect x="44.6" y="6.9" width="24.4" height="23.3" rx="4.4"/></g><g fill="#3b7de9"><path d="M47.1 12.4 H55.8 V15 H52.8 V23 H55.8 V25.6 H47.1 V23 H49.9 V15 H47.1 Z"/><path fill-rule="evenodd" d="M57.1 12.4 H61 C64 12.4 65.8 15.5 65.8 19 C65.8 22.5 64 25.6 61 25.6 H57.1 Z M59.5 15 H60.7 C62.4 15 63.3 16.8 63.3 19 C63.3 21.2 62.4 23 60.7 23 H59.5 Z"/></g></svg>
<div class="a" style="left:18px;top:471px;width:36px;height:36px;border-radius:6px;background:#fff;border:1.5px solid #d3d7de;"></div>
<div class="ds1r1 t" style="left:89.5px;top:503.53px;font-size:23px;color:#3a4456;letter-spacing:-0.03px;">Prior Application PRODUCT_COMBINATION with Highest sum of Approved Status Prior Applications</div>
<div class="ds2r1 t" style="left:89.5px;top:531.53px;font-size:23px;color:#3a4456;letter-spacing:-0.18px;">AMT_CREDITs for the Client over a 104w period.</div>
<div class="a" style="left:90px;top:567px;width:87px;height:29px;border-radius:15px;border:1.5px solid #b64bd9;"></div>
<div class="t" style="left:90px;top:573.46px;font-size:16px;color:#b64bd9;font-weight:700;letter-spacing:0.5px;width:87px;text-align:center;">CLIENT</div>
<div class="a" style="left:186px;top:567px;width:207px;height:29px;border-radius:15px;border:1.5px solid #6fa12e;"></div>
<div class="t" style="left:186px;top:573.46px;font-size:16px;color:#6fa12e;font-weight:700;letter-spacing:0.5px;width:207px;text-align:center;">PRIOR APPLICATIONS</div>
<div class="a" style="left:402px;top:567px;width:172px;height:29px;border-radius:15px;border:1.5px solid #5bc0d9;"></div>
<div class="t" style="left:402px;top:573.46px;font-size:16px;color:#5bc0d9;font-weight:700;letter-spacing:0.5px;width:172px;text-align:center;">MOST FREQUENT</div>
<div class="a" style="left:583px;top:567px;width:108px;height:29px;border-radius:15px;border:1.5px solid #4fae7a;"></div>
<div class="t" style="left:583px;top:573.46px;font-size:16px;color:#4fae7a;font-weight:700;letter-spacing:0.5px;width:108px;text-align:center;">VARCHAR</div>
<div class="t" style="left:1199.5px;top:387.99px;font-size:26px;color:#0e162b;font-weight:700;letter-spacing:-0.9px;">0.13964</div>
<div class="t" style="left:1451.5px;top:387.14px;font-size:27px;color:#0e162b;font-weight:700;">9</div>
<div class="t" style="left:1466.5px;top:394.38px;font-size:22px;color:#0e162b;letter-spacing:-0.5px;-webkit-text-stroke:0.3px #0e162b;">/10</div>
<svg class="a" style="left:1527px;top:385px;" width="33" height="33" viewBox="0 0 24 24" fill="none"><circle cx="12" cy="12" r="10" stroke="#8d939b" stroke-width="2.1" fill="none"/><path d="M9.2 9.3 a2.9 2.9 0 1 1 4.2 2.6 c-.9 .5-1.4 1.1-1.4 2.1 v.6" stroke="#8d939b" stroke-width="2.1" fill="none" stroke-linecap="round"/><circle cx="12" cy="17.6" r="1.2" fill="#8d939b"/></svg>
<svg class="a" style="left:1670px;top:384px;" width="29" height="29" viewBox="0 0 29 29" fill="none"><circle cx="14.5" cy="14.5" r="12" stroke="#d9622b" stroke-width="2.6" fill="none"/><path d="M9.5 15 L13 18 L19.5 11.5" stroke="#d9622b" stroke-width="2.6" fill="none" stroke-linecap="round" stroke-linejoin="round"/></svg>
<div class="t" style="left:1706.5px;top:384.99px;font-size:26px;color:#d9622b;font-weight:700;letter-spacing:0.3px;">NEW</div>
<svg class="a" style="left:2058px;top:475px;" width="34" height="26" viewBox="0 0 34 26" fill="none"><path d="M5 6 L17 18 L29 6" stroke="#7d848c" stroke-width="3.2" fill="none" stroke-linecap="round" stroke-linejoin="round"/></svg>
<div class="a" style="left:0px;top:616px;width:2136px;height:2px;background:#e1e4e8;"></div>
<div class="nm1r2 t" style="left:89.5px;top:642.99px;font-size:26px;color:#0e162b;font-weight:700;letter-spacing:-0.675px;">CLIENT_Most_Frequent_Refused_Status_Prior_Application_PRODUCT_COMBINATION_1</div>
<div class="nm2r2 t" style="left:89.5px;top:673.99px;font-size:26px;color:#0e162b;font-weight:700;letter-spacing:-0.02px;">04w</div>
<svg class="a" style="left:96px;top:710px;" width="80" height="38" viewBox="0 0 80 38" fill="none"><g stroke="#3b7de9" stroke-width="2.3" fill="none" stroke-linecap="round" stroke-linejoin="round"><rect x="13.9" y="12.6" width="16.6" height="16.6" rx="3.6"/><path d="M9.6 23.6 C8.9 22.9 8.5 22.1 8.5 21 V10.8 C8.5 8.9 9.9 7.4 11.8 7.4 H22.4 C23.4 7.4 24.2 7.9 24.7 8.7"/><rect x="44.6" y="6.9" width="24.4" height="23.3" rx="4.4"/></g><g fill="#3b7de9"><path d="M47.1 12.4 H55.8 V15 H52.8 V23 H55.8 V25.6 H47.1 V23 H49.9 V15 H47.1 Z"/><path fill-rule="evenodd" d="M57.1 12.4 H61 C64 12.4 65.8 15.5 65.8 19 C65.8 22.5 64 25.6 61 25.6 H57.1 Z M59.5 15 H60.7 C62.4 15 63.3 16.8 63.3 19 C63.3 21.2 62.4 23 60.7 23 H59.5 Z"/></g></svg>
<div class="a" style="left:18px;top:729px;width:36px;height:36px;border-radius:6px;background:#fff;border:1.5px solid #d3d7de;"></div>
<div class="ds1r2 t" style="left:89.5px;top:761.53px;font-size:23px;color:#3a4456;letter-spacing:-0.169px;">Most Frequent Refused Status Prior Application PRODUCT_COMBINATION for the Client over a 104w</div>
<div class="ds2r2 t" style="left:89.5px;top:789.53px;font-size:23px;color:#3a4456;letter-spacing:0.297px;">period.</div>
<div class="a" style="left:90px;top:825px;width:87px;height:29px;border-radius:15px;border:1.5px solid #b64bd9;"></div>
<div class="t" style="left:90px;top:831.46px;font-size:16px;color:#b64bd9;font-weight:700;letter-spacing:0.5px;width:87px;text-align:center;">CLIENT</div>
<div class="a" style="left:186px;top:825px;width:207px;height:29px;border-radius:15px;border:1.5px solid #6fa12e;"></div>
<div class="t" style="left:186px;top:831.46px;font-size:16px;color:#6fa12e;font-weight:700;letter-spacing:0.5px;width:207px;text-align:center;">PRIOR APPLICATIONS</div>
<div class="a" style="left:402px;top:825px;width:172px;height:29px;border-radius:15px;border:1.5px solid #5bc0d9;"></div>
<div class="t" style="left:402px;top:831.46px;font-size:16px;color:#5bc0d9;font-weight:700;letter-spacing:0.5px;width:172px;text-align:center;">MOST FREQUENT</div>
<div class="a" style="left:583px;top:825px;width:108px;height:29px;border-radius:15px;border:1.5px solid #4fae7a;"></div>
<div class="t" style="left:583px;top:831.46px;font-size:16px;color:#4fae7a;font-weight:700;letter-spacing:0.5px;width:108px;text-align:center;">VARCHAR</div>
<div class="t" style="left:1199.5px;top:645.99px;font-size:26px;color:#0e162b;font-weight:700;letter-spacing:-0.9px;">0.13554</div>
<div class="t" style="left:1451.5px;top:645.14px;font-size:27px;color:#0e162b;font-weight:700;">8</div>
<div class="t" style="left:1466.5px;top:652.38px;font-size:22px;color:#0e162b;letter-spacing:-0.5px;-webkit-text-stroke:0.3px #0e162b;">/10</div>
<svg class="a" style="left:1527px;top:643px;" width="33" height="33" viewBox="0 0 24 24" fill="none"><circle cx="12" cy="12" r="10" stroke="#8d939b" stroke-width="2.1" fill="none"/><path d="M9.2 9.3 a2.9 2.9 0 1 1 4.2 2.6 c-.9 .5-1.4 1.1-1.4 2.1 v.6" stroke="#8d939b" stroke-width="2.1" fill="none" stroke-linecap="round"/><circle cx="12" cy="17.6" r="1.2" fill="#8d939b"/></svg>
<svg class="a" style="left:1670px;top:642px;" width="29" height="29" viewBox="0 0 29 29" fill="none"><circle cx="14.5" cy="14.5" r="12" stroke="#d9622b" stroke-width="2.6" fill="none"/><path d="M9.5 15 L13 18 L19.5 11.5" stroke="#d9622b" stroke-width="2.6" fill="none" stroke-linecap="round" stroke-linejoin="round"/></svg>
<div class="t" style="left:1706.5px;top:642.99px;font-size:26px;color:#d9622b;font-weight:700;letter-spacing:0.3px;">NEW</div>
<svg class="a" style="left:2058px;top:733px;" width="34" height="26" viewBox="0 0 34 26" fill="none"><path d="M5 6 L17 18 L29 6" stroke="#7d848c" stroke-width="3.2" fill="none" stroke-linecap="round" stroke-linejoin="round"/></svg>
<div class="a" style="left:0px;top:874px;width:2136px;height:2px;background:#e1e4e8;"></div>
<div class="nm1r3 t" style="left:89.5px;top:900.99px;font-size:26px;color:#0e162b;font-weight:700;letter-spacing:-0.416px;">CLIENT_Most_Frequent_Approved_Status_Prior_Application_PRODUCT_COMBINATION_</div>
<div class="nm2r3 t" style="left:89.5px;top:931.99px;font-size:26px;color:#0e162b;font-weight:700;letter-spacing:-0.087px;">104w</div>
<svg class="a" style="left:96px;top:968px;" width="80" height="38" viewBox="0 0 80 38" fill="none"><g stroke="#3b7de9" stroke-width="2.3" fill="none" stroke-linecap="round" stroke-linejoin="round"><rect x="13.9" y="12.6" width="16.6" height="16.6" rx="3.6"/><path d="M9.6 23.6 C8.9 22.9 8.5 22.1 8.5 21 V10.8 C8.5 8.9 9.9 7.4 11.8 7.4 H22.4 C23.4 7.4 24.2 7.9 24.7 8.7"/><rect x="44.6" y="6.9" width="24.4" height="23.3" rx="4.4"/></g><g fill="#3b7de9"><path d="M47.1 12.4 H55.8 V15 H52.8 V23 H55.8 V25.6 H47.1 V23 H49.9 V15 H47.1 Z"/><path fill-rule="evenodd" d="M57.1 12.4 H61 C64 12.4 65.8 15.5 65.8 19 C65.8 22.5 64 25.6 61 25.6 H57.1 Z M59.5 15 H60.7 C62.4 15 63.3 16.8 63.3 19 C63.3 21.2 62.4 23 60.7 23 H59.5 Z"/></g></svg>
<div class="a" style="left:18px;top:987px;width:36px;height:36px;border-radius:6px;background:#fff;border:1.5px solid #d3d7de;"></div>
<div class="ds1r3 t" style="left:89.5px;top:1019.53px;font-size:23px;color:#3a4456;letter-spacing:-0.128px;">Most Frequent Approved Status Prior Application PRODUCT_COMBINATION for the Client over a 104w</div>
<div class="ds2r3 t" style="left:89.5px;top:1047.53px;font-size:23px;color:#3a4456;letter-spacing:0.297px;">period.</div>
<div class="a" style="left:90px;top:1083px;width:87px;height:29px;border-radius:15px;border:1.5px solid #b64bd9;"></div>
<div class="t" style="left:90px;top:1089.46px;font-size:16px;color:#b64bd9;font-weight:700;letter-spacing:0.5px;width:87px;text-align:center;">CLIENT</div>
<div class="a" style="left:186px;top:1083px;width:207px;height:29px;border-radius:15px;border:1.5px solid #6fa12e;"></div>
<div class="t" style="left:186px;top:1089.46px;font-size:16px;color:#6fa12e;font-weight:700;letter-spacing:0.5px;width:207px;text-align:center;">PRIOR APPLICATIONS</div>
<div class="a" style="left:402px;top:1083px;width:172px;height:29px;border-radius:15px;border:1.5px solid #5bc0d9;"></div>
<div class="t" style="left:402px;top:1089.46px;font-size:16px;color:#5bc0d9;font-weight:700;letter-spacing:0.5px;width:172px;text-align:center;">MOST FREQUENT</div>
<div class="a" style="left:583px;top:1083px;width:108px;height:29px;border-radius:15px;border:1.5px solid #4fae7a;"></div>
<div class="t" style="left:583px;top:1089.46px;font-size:16px;color:#4fae7a;font-weight:700;letter-spacing:0.5px;width:108px;text-align:center;">VARCHAR</div>
<div class="t" style="left:1199.5px;top:903.99px;font-size:26px;color:#0e162b;font-weight:700;letter-spacing:-0.9px;">0.13506</div>
<div class="t" style="left:1451.5px;top:903.14px;font-size:27px;color:#0e162b;font-weight:700;">8</div>
<div class="t" style="left:1466.5px;top:910.38px;font-size:22px;color:#0e162b;letter-spacing:-0.5px;-webkit-text-stroke:0.3px #0e162b;">/10</div>
<svg class="a" style="left:1527px;top:901px;" width="33" height="33" viewBox="0 0 24 24" fill="none"><circle cx="12" cy="12" r="10" stroke="#8d939b" stroke-width="2.1" fill="none"/><path d="M9.2 9.3 a2.9 2.9 0 1 1 4.2 2.6 c-.9 .5-1.4 1.1-1.4 2.1 v.6" stroke="#8d939b" stroke-width="2.1" fill="none" stroke-linecap="round"/><circle cx="12" cy="17.6" r="1.2" fill="#8d939b"/></svg>
<svg class="a" style="left:1670px;top:900px;" width="29" height="29" viewBox="0 0 29 29" fill="none"><circle cx="14.5" cy="14.5" r="12" stroke="#d9622b" stroke-width="2.6" fill="none"/><path d="M9.5 15 L13 18 L19.5 11.5" stroke="#d9622b" stroke-width="2.6" fill="none" stroke-linecap="round" stroke-linejoin="round"/></svg>
<div class="t" style="left:1706.5px;top:900.99px;font-size:26px;color:#d9622b;font-weight:700;letter-spacing:0.3px;">NEW</div>
<svg class="a" style="left:2058px;top:991px;" width="34" height="26" viewBox="0 0 34 26" fill="none"><path d="M5 6 L17 18 L29 6" stroke="#7d848c" stroke-width="3.2" fill="none" stroke-linecap="round" stroke-linejoin="round"/></svg>
<div class="a" style="left:0px;top:1132px;width:2136px;height:2px;background:#e1e4e8;"></div>
<div class="nm1r4 t" style="left:89.5px;top:1158.99px;font-size:26px;color:#0e162b;font-weight:700;letter-spacing:-0.773px;">CLIENT_Most_Frequent_Refused_Status_Prior_Application_CODE_REJECT_REASON_104</div>
<div class="nm2r4 t" style="left:89.5px;top:1189.99px;font-size:26px;color:#0e162b;font-weight:700;letter-spacing:-0.62px;">w</div>
<svg class="a" style="left:96px;top:1226px;" width="80" height="38" viewBox="0 0 80 38" fill="none"><g stroke="#3b7de9" stroke-width="2.3" fill="none" stroke-linecap="round" stroke-linejoin="round"><rect x="13.9" y="12.6" width="16.6" height="16.6" rx="3.6"/><path d="M9.6 23.6 C8.9 22.9 8.5 22.1 8.5 21 V10.8 C8.5 8.9 9.9 7.4 11.8 7.4 H22.4 C23.4 7.4 24.2 7.9 24.7 8.7"/><rect x="44.6" y="6.9" width="24.4" height="23.3" rx="4.4"/></g><g fill="#3b7de9"><path d="M47.1 12.4 H55.8 V15 H52.8 V23 H55.8 V25.6 H47.1 V23 H49.9 V15 H47.1 Z"/><path fill-rule="evenodd" d="M57.1 12.4 H61 C64 12.4 65.8 15.5 65.8 19 C65.8 22.5 64 25.6 61 25.6 H57.1 Z M59.5 15 H60.7 C62.4 15 63.3 16.8 63.3 19 C63.3 21.2 62.4 23 60.7 23 H59.5 Z"/></g></svg>
<div class="a" style="left:18px;top:1245px;width:36px;height:36px;border-radius:6px;background:#fff;border:1.5px solid #d3d7de;"></div>
<div class="ds1r4 t" style="left:89.5px;top:1277.53px;font-size:23px;color:#3a4456;letter-spacing:-0.249px;">Most Frequent Refused Status Prior Application CODE_REJECT_REASON for the Client over a 104w</div>
<div class="ds2r4 t" style="left:89.5px;top:1305.53px;font-size:23px;color:#3a4456;letter-spacing:0.297px;">period.</div>
<div class="a" style="left:90px;top:1341px;width:87px;height:29px;border-radius:15px;border:1.5px solid #b64bd9;"></div>
<div class="t" style="left:90px;top:1347.46px;font-size:16px;color:#b64bd9;font-weight:700;letter-spacing:0.5px;width:87px;text-align:center;">CLIENT</div>
<div class="a" style="left:186px;top:1341px;width:207px;height:29px;border-radius:15px;border:1.5px solid #6fa12e;"></div>
<div class="t" style="left:186px;top:1347.46px;font-size:16px;color:#6fa12e;font-weight:700;letter-spacing:0.5px;width:207px;text-align:center;">PRIOR APPLICATIONS</div>
<div class="a" style="left:402px;top:1341px;width:172px;height:29px;border-radius:15px;border:1.5px solid #5bc0d9;"></div>
<div class="t" style="left:402px;top:1347.46px;font-size:16px;color:#5bc0d9;font-weight:700;letter-spacing:0.5px;width:172px;text-align:center;">MOST FREQUENT</div>
<div class="a" style="left:583px;top:1341px;width:108px;height:29px;border-radius:15px;border:1.5px solid #4fae7a;"></div>
<div class="t" style="left:583px;top:1347.46px;font-size:16px;color:#4fae7a;font-weight:700;letter-spacing:0.5px;width:108px;text-align:center;">VARCHAR</div>
<div class="t" style="left:1199.5px;top:1161.99px;font-size:26px;color:#0e162b;font-weight:700;letter-spacing:-0.9px;">0.13353</div>
<div class="t" style="left:1451.5px;top:1161.14px;font-size:27px;color:#0e162b;font-weight:700;">8</div>
<div class="t" style="left:1466.5px;top:1168.38px;font-size:22px;color:#0e162b;letter-spacing:-0.5px;-webkit-text-stroke:0.3px #0e162b;">/10</div>
<svg class="a" style="left:1527px;top:1159px;" width="33" height="33" viewBox="0 0 24 24" fill="none"><circle cx="12" cy="12" r="10" stroke="#8d939b" stroke-width="2.1" fill="none"/><path d="M9.2 9.3 a2.9 2.9 0 1 1 4.2 2.6 c-.9 .5-1.4 1.1-1.4 2.1 v.6" stroke="#8d939b" stroke-width="2.1" fill="none" stroke-linecap="round"/><circle cx="12" cy="17.6" r="1.2" fill="#8d939b"/></svg>
<svg class="a" style="left:1670px;top:1158px;" width="29" height="29" viewBox="0 0 29 29" fill="none"><circle cx="14.5" cy="14.5" r="12" stroke="#d9622b" stroke-width="2.6" fill="none"/><path d="M9.5 15 L13 18 L19.5 11.5" stroke="#d9622b" stroke-width="2.6" fill="none" stroke-linecap="round" stroke-linejoin="round"/></svg>
<div class="t" style="left:1706.5px;top:1158.99px;font-size:26px;color:#d9622b;font-weight:700;letter-spacing:0.3px;">NEW</div>
<svg class="a" style="left:2058px;top:1249px;" width="34" height="26" viewBox="0 0 34 26" fill="none"><path d="M5 6 L17 18 L29 6" stroke="#7d848c" stroke-width="3.2" fill="none" stroke-linecap="round" stroke-linejoin="round"/></svg>
<div class="a" style="left:0px;top:1337px;width:2136px;height:70px;background:#f6f7f9;border-top:2px solid #dde1e6;"></div>
<div class="t" style="left:13.5px;top:1361.68px;font-size:24px;color:#0e162b;letter-spacing:-0.5px;-webkit-text-stroke:0.5px #0e162b;">Results: 1 - 100 of 222</div>
<div class="t" style="left:1483.5px;top:1361.53px;font-size:23px;color:#0e162b;font-weight:700;letter-spacing:-0.75px;">Rows per page:</div>
<div class="a" style="left:1673px;top:1346px;width:144px;height:54px;border-radius:9px;border:1.5px solid #d6dae0;background:#fff;"></div>
<div class="t" style="left:1690.5px;top:1362.07px;font-size:20px;color:#0e162b;-webkit-text-stroke:0.2px #0e162b;">100</div>
<svg class="a" style="left:1781px;top:1362px;" width="18" height="22" viewBox="0 0 18 22" fill="none"><g stroke="#5b616a" stroke-width="2" fill="none" stroke-linecap="round" stroke-linejoin="round"><path d="M4 8 L9 3 L14 8"/><path d="M4 14 L9 19 L14 14"/></g></svg>
<div class="a" style="left:1844px;top:1350px;width:47px;height:47px;border-radius:50%;background:#f2f3f5;"></div>
<svg class="a" style="left:1856px;top:1362px;" width="22" height="22" viewBox="0 0 22 22" fill="none"><path d="M13.5 5 L8 11 L13.5 17" stroke="#8a9099" stroke-width="2" fill="none" stroke-linecap="round" stroke-linejoin="round"/></svg>
<div class="a" style="left:1901px;top:1350px;width:47px;height:47px;border-radius:50%;background:#3b7de9;"></div>
<div class="t" style="left:1901px;top:1361.68px;font-size:24px;color:#fff;width:47px;text-align:center;">1</div>
<div class="a" style="left:1959px;top:1350px;width:47px;height:47px;border-radius:50%;background:#fff;"></div>
<div class="t" style="left:1959px;top:1361.68px;font-size:24px;color:#0e162b;width:47px;text-align:center;">2</div>
<div class="a" style="left:2017px;top:1350px;width:47px;height:47px;border-radius:50%;background:#fff;"></div>
<div class="t" style="left:2017px;top:1361.68px;font-size:24px;color:#0e162b;width:47px;text-align:center;">3</div>
<div class="a" style="left:2074px;top:1350px;width:47px;height:47px;border-radius:50%;background:#fff;"></div>
<svg class="a" style="left:2086px;top:1362px;" width="22" height="22" viewBox="0 0 22 22" fill="none"><path d="M8.5 5 L14 11 L8.5 17" stroke="#0e162b" stroke-width="2.2" fill="none" stroke-linecap="round" stroke-linejoin="round"/></svg>
</div>
<div class="a" style="left:2149px;top:2114px;width:324px;height:72px;border-radius:36px;background:#e9ebee;"></div>
<div class="t" style="left:2221.5px;top:2133.14px;font-size:27px;color:#b3b9c1;letter-spacing:-0.13px;-webkit-text-stroke:0.6px #b3b9c1;">Run EDA Analysis</div>
<svg class="a" style="left:2178px;top:2132px" width="28" height="34" viewBox="0 0 28 34" fill="none"><path d="M5 4 L23 17 L5 30 Z" stroke="#b3b9c1" stroke-width="2.6" stroke-linejoin="round"/></svg>
<div class="a" style="left:2503px;top:2114px;width:461px;height:72px;border-radius:36px;background:#e9ebee;"></div>
<div class="t" style="left:2589.5px;top:2133.14px;font-size:27px;color:#b3b9c1;letter-spacing:-0.15px;-webkit-text-stroke:0.6px #b3b9c1;">Save Features / Feature List</div>
<svg class="a" style="left:2533px;top:2127px" width="36" height="36" viewBox="0 0 36 36" fill="none"><g stroke="#b3b9c1" stroke-width="3" stroke-linejoin="round"><path d="M4 6 a3 3 0 0 1 3-3 H25 L32 10 V30 a3 3 0 0 1-3 3 H7 a3 3 0 0 1-3-3 Z"/><path d="M11 3 V11 H23 V3"/><circle cx="18" cy="23" r="4"/></g></svg>
<div class="a" style="left:2993px;top:2114px;width:360px;height:72px;border-radius:36px;background:#e9ebee;"></div>
<div class="t" style="left:3079.5px;top:2133.14px;font-size:27px;color:#b3b9c1;-webkit-text-stroke:0.6px #b3b9c1;">Generate Notebook</div>
<svg class="a" style="left:3021px;top:2124px" width="40" height="30" viewBox="0 0 40 30" fill="none"><g stroke="#b3b9c1" stroke-width="3" stroke-linecap="round"><circle cx="6" cy="6" r="3.5"/><circle cx="20" cy="6" r="3.5"/><circle cx="34" cy="6" r="3.5"/><path d="M6 9.5 V16 a4 4 0 0 0 4 4 H30 a4 4 0 0 0 4-4 V9.5"/><path d="M20 9.5 V30"/></g></svg>
<div class="a" style="left:3340px;top:2030px;width:90px;height:90px;border-radius:50%;background:#3b7de9;box-shadow:0 4px 10px rgba(0,0,0,.25);z-index:6;"></div>
<div class="t" style="left:3340px;top:2048px;width:90px;text-align:center;font-size:54px;font-weight:700;color:#fff;z-index:7;">?</div></body></html>
